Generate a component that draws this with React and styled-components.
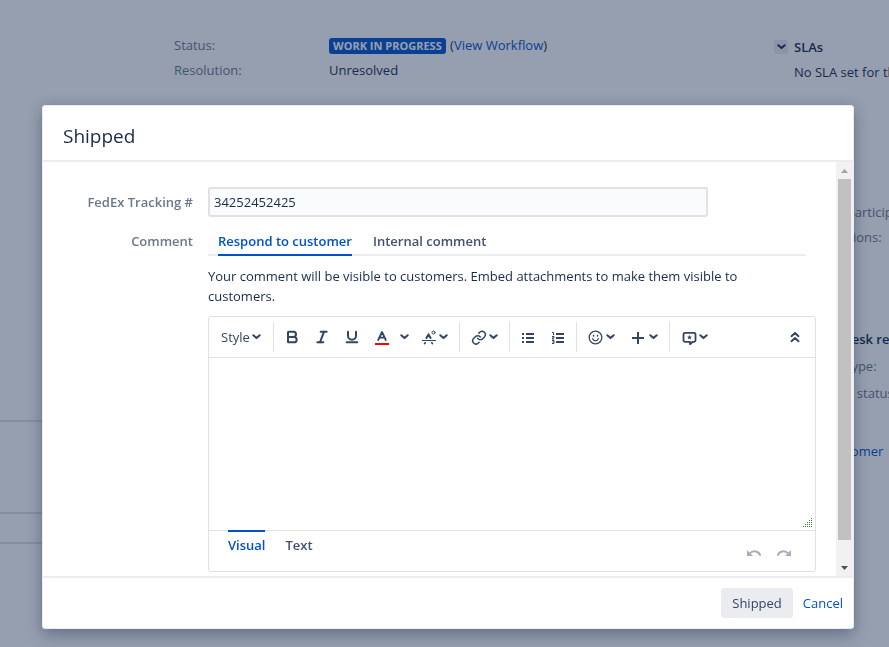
import React, { useState } from "react";
import styled, { createGlobalStyle, css } from "styled-components";
import { Bold, Italic, Underline } from "lucide-react";

const App = () => {
  const [tracking, setTracking] = useState("34252452425");
  const [tab, setTab] = useState("respond");
  const [mode, setMode] = useState("visual");
  const [comment, setComment] = useState("");

  return (
    <>
      <GlobalStyle />
      <IssuePage />
      <Blanket>
        <Dialog role="dialog" aria-labelledby="dialog-title">
          <DialogHeader>
            <DialogTitle id="dialog-title">Shipped</DialogTitle>
          </DialogHeader>
          <DialogMain>
            <Form id="shipped-form" onSubmit={(e) => e.preventDefault()}>
              <FieldRow>
                <Label htmlFor="tracking">FedEx Tracking #</Label>
                <TextInput
                  id="tracking"
                  type="text"
                  value={tracking}
                  onChange={(e) => setTracking(e.target.value)}
                />
              </FieldRow>
              <FieldRow>
                <Label htmlFor="comment">Comment</Label>
                <div>
                  <Tabs>
                    <Tab
                      type="button"
                      $active={tab === "respond"}
                      onClick={() => setTab("respond")}
                    >
                      Respond to customer
                    </Tab>
                    <Tab
                      type="button"
                      $active={tab === "internal"}
                      onClick={() => setTab("internal")}
                    >
                      Internal comment
                    </Tab>
                  </Tabs>
                  <Hint>
                    Your comment will be visible to customers. Embed attachments
                    to make them visible to customers.
                  </Hint>
                  <Editor>
                    <EditorToolbar />
                    <EditorArea>
                      <CommentBox
                        id="comment"
                        value={comment}
                        onChange={(e) => setComment(e.target.value)}
                      />
                      <ResizeGrip />
                    </EditorArea>
                    <EditorFooter>
                      <ModeTab
                        type="button"
                        $active={mode === "visual"}
                        onClick={() => setMode("visual")}
                      >
                        Visual
                      </ModeTab>
                      <ModeTab
                        type="button"
                        $active={mode === "text"}
                        onClick={() => setMode("text")}
                      >
                        Text
                      </ModeTab>
                      <History>
                        <HistoryButton type="button" aria-label="Undo">
                          <UndoIcon />
                        </HistoryButton>
                        <HistoryButton type="button" aria-label="Redo">
                          <RedoIcon />
                        </HistoryButton>
                      </History>
                    </EditorFooter>
                  </Editor>
                </div>
              </FieldRow>
            </Form>
            <Scrollbar aria-hidden="true">
              <ScrollArrow $color="#a3a3a3">
                <svg width="7" height="4" viewBox="0 0 7 4">
                  <path d="M0 4 3.5 0 7 4z" />
                </svg>
              </ScrollArrow>
              <ScrollTrack>
                <ScrollThumb />
              </ScrollTrack>
              <ScrollArrow $color="#505050">
                <svg width="7" height="4" viewBox="0 0 7 4">
                  <path d="M0 0h7L3.5 4z" />
                </svg>
              </ScrollArrow>
            </Scrollbar>
          </DialogMain>
          <DialogFooter>
            <SubmitButton type="submit" form="shipped-form">
              Shipped
            </SubmitButton>
            <Link href="#cancel">Cancel</Link>
          </DialogFooter>
        </Dialog>
      </Blanket>
    </>
  );
};

export default App;

// The issue view that stays visible under the blanket
const IssuePage = () => (
  <Page>
    <Main>
      <Details>
        <dt>Status:</dt>
        <dd>
          <Lozenge>Work in progress</Lozenge> (
          <Link href="#workflow">View Workflow</Link>)
        </dd>
        <dt>Resolution:</dt>
        <dd>Unresolved</dd>
      </Details>
      <Module $height={92} />
      <Module $height={30} />
      <Module $height={102} />
    </Main>
    <Sidebar>
      <SideSection $height={165}>
        <SideTitle>
          <Toggle type="button" aria-label="Toggle SLAs">
            <Chevron />
          </Toggle>
          SLAs
        </SideTitle>
        <SideText>No SLA set for this issue</SideText>
      </SideSection>
      <SideSection $height={127}>
        <SideText $muted>Request participants:</SideText>
        <SideText $muted>Organizations:</SideText>
      </SideSection>
      <SideSection $height={112} $loose>
        <SideTitle $indent>Service Desk request</SideTitle>
        <SideText $muted>Request type:</SideText>
        <SideText $muted>Customer status:</SideText>
      </SideSection>
      <SideText>
        <Link href="#customer">View customer</Link>
      </SideText>
    </Sidebar>
  </Page>
);

const EditorToolbar = () => (
  <Toolbar>
    <Group>
      <StyleButton type="button" $menu>
        Style
        <Chevron />
      </StyleButton>
    </Group>
    <Group>
      <ToolButton type="button" aria-label="Bold">
        <Bold size={16} strokeWidth={3} />
      </ToolButton>
      <ToolButton type="button" aria-label="Italic">
        <Italic size={16} strokeWidth={3} />
      </ToolButton>
      <ToolButton type="button" aria-label="Underline">
        <Underline size={16} strokeWidth={3} />
      </ToolButton>
      <ToolButton type="button" aria-label="Text color">
        <TextColorIcon />
      </ToolButton>
      <ToolButton type="button" aria-label="More colors" $narrow>
        <Chevron />
      </ToolButton>
      <ToolButton type="button" aria-label="More formatting" $menu>
        <FormattingIcon />
        <Chevron />
      </ToolButton>
    </Group>
    <Group>
      <ToolButton type="button" aria-label="Link" $menu>
        <LinkIcon />
        <Chevron />
      </ToolButton>
    </Group>
    <Group>
      <ToolButton type="button" aria-label="Bullet list">
        <BulletListIcon />
      </ToolButton>
      <ToolButton type="button" aria-label="Numbered list">
        <NumberListIcon />
      </ToolButton>
    </Group>
    <Group>
      <ToolButton type="button" aria-label="Emoji" $menu>
        <EmojiIcon />
        <Chevron />
      </ToolButton>
      <ToolButton type="button" aria-label="Insert" $menu>
        <PlusIcon />
        <Chevron />
      </ToolButton>
    </Group>
    <Group>
      <ToolButton type="button" aria-label="Canned responses" $menu>
        <ResponseIcon />
        <Chevron />
      </ToolButton>
    </Group>
    <CollapseButton type="button" aria-label="Collapse toolbar">
      <DoubleChevronIcon />
    </CollapseButton>
  </Toolbar>
);

// Icons

const Chevron = () => (
  <Icon width="9" height="6" viewBox="0 0 9 6">
    <path d="M1.3 1.2 4.5 4.1l3.2-2.9" strokeWidth="2" />
  </Icon>
);

const DoubleChevronIcon = () => (
  <Icon width="10" height="12" viewBox="0 0 10 12">
    <path d="M1.5 5.2 5 2l3.5 3.2M1.5 10.2 5 7l3.5 3.2" strokeWidth="2" />
  </Icon>
);

const TextColorIcon = () => (
  <Icon width="16" height="16" viewBox="0 0 16 16">
    <path d="M4.2 11 8 3l3.8 8M5.500 8.600h5" strokeWidth="1.8" />
    <path d="M1 15h14" stroke="#ff0000" strokeWidth="2" strokeLinecap="butt" />
  </Icon>
);

const FormattingIcon = () => (
  <Icon width="16" height="16" viewBox="0 0 16 16">
    <path d="M5.4 9 7.5 5.400 9.600 9" strokeWidth="2" />
    <path d="M1 11.5h14" strokeWidth="1" strokeLinecap="butt" />
    <path d="M4.200 13.800l-.6.8M10.800 13.800l.6.8" strokeWidth="1.7" />
    <circle cx="12.5" cy="3.5" r="1.5" strokeWidth="1" />
  </Icon>
);

const LinkIcon = () => (
  <Icon width="16" height="16" viewBox="0 0 24 24">
    <path
      d="M10 14a5 5 0 0 0 7.5.5l3-3a5 5 0 0 0-7-7l-1.7 1.7M14 12a5 5 0 0 0-7.5-.5l-3 3a5 5 0 0 0 7 7l1.7-1.7"
      strokeWidth="2.2"
    />
  </Icon>
);

const BulletListIcon = () => (
  <Icon width="14" height="14" viewBox="0 0 14 14">
    <path d="M1 4h2M1 8h2M1 12h2M5 4h8M5 8h8M5 12h8" strokeWidth="2" strokeLinecap="butt" />
  </Icon>
);

const NumberListIcon = () => (
  <Icon width="14" height="14" viewBox="0 0 14 14">
    <path d="M5 4h8M5 8h8M5 12h8" strokeWidth="2" strokeLinecap="butt" />
    <path
      d="M1 2.5h1.5v2.7M1 6.500h2v1.300H1.500v1.300h1.700M1 10.500h2v3H1M1.500 12H3"
      strokeWidth="1"
      strokeLinecap="butt"
    />
  </Icon>
);

const EmojiIcon = () => (
  <Icon width="16" height="16" viewBox="0 0 16 16">
    <circle cx="7.5" cy="8.5" r="6.300" strokeWidth="1.300" />
    <path d="M4.700 9.700a2.900 2.900 0 0 0 5.600 0" strokeWidth="1.300" />
    <path d="M5.500 6.500v.6M9.500 6.500v.6" strokeWidth="1.500" />
  </Icon>
);

const PlusIcon = () => (
  <Icon width="16" height="16" viewBox="0 0 16 16">
    <path d="M7 3v12M1 9h12" strokeWidth="2" strokeLinecap="butt" />
  </Icon>
);

const ResponseIcon = () => (
  <Icon width="16" height="16" viewBox="0 0 16 16">
    <path
      d="M4 3.800h9a1.500 1.500 0 0 1 1.500 1.500v6A1.500 1.500 0 0 1 13 12.800h-1.200L9 15.200v-2.400H4a1.500 1.500 0 0 1-1.500-1.500v-6A1.500 1.500 0 0 1 4 3.800z"
      strokeWidth="1.800"
    />
    <path
      d="m8.500 5.800.7 1.700 1.800.2-1.400 1.100.5 1.800-1.600-1-1.600 1 .5-1.800-1.400-1.100 1.800-.2z"
      fill="currentColor"
      stroke="none"
    />
  </Icon>
);

const UndoIcon = () => (
  <Icon width="14" height="8" viewBox="0 0 14 8">
    <path d="M3.500 3.800C6.500 1.600 11.500 1.500 13 6" strokeWidth="2" />
    <path d="M0 1v6h6z" fill="currentColor" stroke="none" />
  </Icon>
);

const RedoIcon = () => (
  <Icon width="14" height="8" viewBox="0 0 14 8">
    <path d="M10.500 3.800C7.500 1.600 2.500 1.500 1 6" strokeWidth="2" />
    <path d="M14 1v6H8z" fill="currentColor" stroke="none" />
  </Icon>
);

const gripDots = [0, 1, 2, 3, 4].flatMap((row) =>
  Array.from({ length: row + 1 }, (_, i) => ({ x: 8 - i * 2, y: row * 2 }))
);

const ResizeGrip = () => (
  <Grip width="9" height="9" viewBox="0 0 9 9">
    {gripDots.map((dot) => (
      <rect key={`${dot.x}-${dot.y}`} x={dot.x} y={dot.y} width="1" height="1" />
    ))}
  </Grip>
);

// Styles

const GlobalStyle = createGlobalStyle`
  * {
    box-sizing: border-box;
  }

  body {
    margin: 0;
    background: #fff;
    color: #172b4d;
    font-family: "Open Sans", "Noto Sans", sans-serif;
    font-size: 13px;
    line-height: 20px;
  }

  button,
  input,
  textarea {
    font: inherit;
    color: inherit;
  }
`;

const buttonReset = css`
  padding: 0;
  border: 0;
  background: none;
  cursor: pointer;
`;

const Icon = styled.svg`
  flex: none;
  fill: none;
  stroke: currentColor;
  stroke-linecap: round;
  stroke-linejoin: round;
`;

const Link = styled.a`
  color: #0052cc;
  text-decoration: none;

  &:hover {
    text-decoration: underline;
  }
`;

const Page = styled.div`
  display: flex;
  height: 100vh;
  overflow: hidden;
`;

const Main = styled.main`
  flex: 1;
  display: flex;
  flex-direction: column;
`;

const Details = styled.dl`
  display: grid;
  grid-template-columns: 155px 1fr;
  grid-auto-rows: 20px;
  row-gap: 5px;
  height: 385px;
  margin: 35px 0 0;
  padding-left: 174px;

  dt {
    color: #6b778c;
  }

  dd {
    margin: 0;
  }
`;

const Lozenge = styled.span`
  display: inline-block;
  margin-right: 1px;
  padding: 0 4px;
  border-radius: 3px;
  background: #0052cc;
  color: #fff;
  font-size: 11px;
  font-weight: 700;
  line-height: 16px;
  text-transform: uppercase;
`;

const Module = styled.section`
  height: ${(props) => props.$height}px;
  border-top: 2px solid #dfe1e6;
`;

const Sidebar = styled.aside`
  width: 115px;
  padding-top: 37px;
  overflow: hidden;
  white-space: nowrap;
`;

const SideSection = styled.section`
  display: flex;
  flex-direction: column;
  gap: ${(props) => (props.$loose ? 7 : 5)}px;
  height: ${(props) => props.$height}px;
`;

const SideTitle = styled.div`
  display: flex;
  align-items: center;
  gap: 6px;
  padding-left: ${(props) => (props.$indent ? 20 : 0)}px;
  font-weight: 600;
`;

const Toggle = styled.button`
  ${buttonReset}
  display: flex;
  align-items: center;
  justify-content: center;
  width: 14px;
  height: 14px;
  border-radius: 3px;
  background: #ebecf0;
`;

const SideText = styled.div`
  padding-left: 20px;
  color: ${(props) => (props.$muted ? "#6b778c" : "inherit")};
`;

const Blanket = styled.div`
  position: fixed;
  inset: 0;
  padding: 105px 35px 19px 42px;
  background: rgba(23, 43, 77, 0.45);
`;

const Dialog = styled.div`
  border: 1px solid #ebecf0;
  border-radius: 3px;
  background: #fff;
  box-shadow: 0 8px 16px rgba(9, 30, 66, 0.25), 0 0 12px rgba(9, 30, 66, 0.15);
`;

const DialogHeader = styled.header`
  padding: 18px 20px 12px;
  border-bottom: 2px solid #ebecf0;
`;

const DialogTitle = styled.h2`
  margin: 0;
  font-size: 19px;
  font-weight: 400;
  line-height: 24px;
`;

const DialogMain = styled.div`
  display: flex;
`;

const Form = styled.form`
  flex: 1;
  display: flex;
  flex-direction: column;
  gap: 9px;
  padding: 25px 20px 4px 0;
`;

const FieldRow = styled.div`
  display: grid;
  grid-template-columns: 150px 1fr;
  column-gap: 15px;
`;

const Label = styled.label`
  padding-top: 5px;
  color: #6b778c;
  font-weight: 600;
  text-align: right;
`;

const TextInput = styled.input`
  width: 100%;
  max-width: 500px;
  height: 30px;
  padding: 0 4px;
  border: 2px solid #dfe1e6;
  border-radius: 3px;
  background: #fafbfc;
  outline: none;
`;

const Tabs = styled.div`
  display: flex;
  gap: 21px;
  margin-right: 10px;
  padding-left: 10px;
  box-shadow: inset 0 -2px #ebecf0;
`;

const Tab = styled.button`
  ${buttonReset}
  padding: 5px 0 3px;
  border-bottom: 2px solid
    ${(props) => (props.$active ? "#0052cc" : "transparent")};
  color: ${(props) => (props.$active ? "#0052cc" : "#42526e")};
  font-weight: 600;
`;

const Hint = styled.p`
  margin: 10px 0;
  padding-right: 20px;
`;

const Editor = styled.div`
  border: 1px solid #dfe1e6;
  border-radius: 3px;
`;

const Toolbar = styled.div`
  display: flex;
  align-items: center;
  height: 41px;
  border-bottom: 1px solid #dfe1e6;
  color: #344563;
`;

const Group = styled.div`
  display: flex;
  height: 30px;
  padding: 0 3px;
  border-right: 1px solid #dfe1e6;

  &:nth-last-of-type(1) {
    border-right: 0;
  }
`;

const toolWidth = (props) => {
  if (props.$narrow) return "16px";
  return props.$menu ? "auto" : "30px";
};

const ToolButton = styled.button`
  ${buttonReset}
  display: flex;
  align-items: center;
  justify-content: center;
  gap: 2px;
  width: ${toolWidth};
  padding: 0 ${(props) => (props.$menu ? 8 : 0)}px;
`;

const StyleButton = styled(ToolButton)`
  padding: 0 9px;
`;

const CollapseButton = styled(ToolButton)`
  height: 30px;
  margin: 0 5px 0 auto;
`;

const EditorArea = styled.div`
  position: relative;
`;

const CommentBox = styled.textarea`
  display: block;
  width: 100%;
  height: 172px;
  padding: 10px;
  border: 0;
  background: transparent;
  outline: none;
  resize: none;
`;

const Grip = styled.svg`
  position: absolute;
  right: 3px;
  bottom: 3px;
  fill: #3f7a2e;
`;

const EditorFooter = styled.div`
  display: flex;
  align-items: flex-start;
  gap: 20px;
  height: 41px;
  padding: 0 20px 0 19px;
  box-shadow: inset 0 1px #dfe1e6;
`;

const ModeTab = styled.button`
  ${buttonReset}
  padding-top: 3px;
  border-top: 2px solid
    ${(props) => (props.$active ? "#0052cc" : "transparent")};
  color: ${(props) => (props.$active ? "#0052cc" : "#42526e")};
  font-weight: 600;
`;

const History = styled.div`
  display: flex;
  align-self: flex-end;
  gap: 16px;
  margin-left: auto;
  padding: 0 4px 14px 0;
  color: #a5adba;
`;

const HistoryButton = styled.button`
  ${buttonReset}
  display: flex;
`;

const Scrollbar = styled.div`
  display: flex;
  flex-direction: column;
  width: 17px;
  background: #f1f1f1;
`;

const ScrollArrow = styled.div`
  display: flex;
  align-items: center;
  justify-content: center;
  height: 17px;
  fill: ${(props) => props.$color};
`;

const ScrollTrack = styled.div`
  flex: 1;
  padding: 0 2px;
`;

const ScrollThumb = styled.div`
  height: 95%;
  background: #c1c1c1;
`;

const DialogFooter = styled.footer`
  display: flex;
  align-items: center;
  justify-content: flex-end;
  gap: 10px;
  padding: 10px;
  border-top: 2px solid #ebecf0;
`;

const SubmitButton = styled.button`
  ${buttonReset}
  height: 30px;
  padding: 0 11px;
  border-radius: 3px;
  background: #ebecf0;
  color: #344563;
`;
